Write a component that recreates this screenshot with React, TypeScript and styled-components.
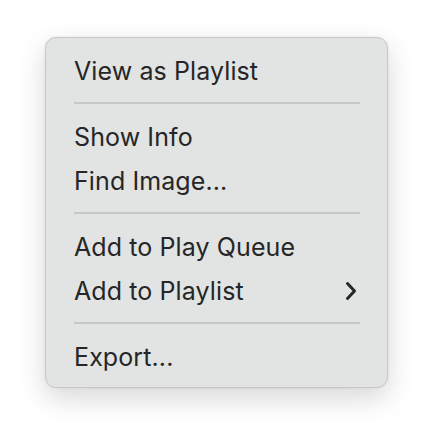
import React from 'react';
import styled, { createGlobalStyle } from 'styled-components';

const GlobalStyle = createGlobalStyle`
  html, body {
    margin: 0;
    padding: 0;
    background: #ffffff;
  }
  body {
    font-family: Inter, "Noto Sans", "Liberation Sans", sans-serif;
    -webkit-font-smoothing: antialiased;
  }
`;

type Entry = { label: string; submenu?: boolean } | 'sep';

const entries: Entry[] = [
  { label: 'View as Playlist' },
  'sep',
  { label: 'Show Info' },
  { label: 'Find Image...' },
  'sep',
  { label: 'Add to Play Queue' },
  { label: 'Add to Playlist', submenu: true },
  'sep',
  { label: 'Export...' },
];

const App: React.FC = () => (
  <Page>
    <GlobalStyle />
    <Menu>
      {entries.map((e, i) =>
        e === 'sep' ? (
          <Separator key={i} />
        ) : (
          <Item key={i}>
            <Label>{e.label}</Label>
            {e.submenu && (
              <Chevron viewBox="0 0 12 20" width="12" height="20">
                <path
                  d="M2.5 2.5 L9.5 10 L2.5 17.5"
                  fill="none"
                  stroke="#262626"
                  strokeWidth="3"
                  strokeLinecap="round"
                  strokeLinejoin="round"
                />
              </Chevron>
            )}
          </Item>
        )
      )}
    </Menu>
  </Page>
);

const Page = styled.div`
  padding: 37px 0 0 45px;
  min-height: 442px;
  box-sizing: border-box;
`;

const Menu = styled.div`
  width: 343px;
  box-sizing: border-box;
  padding: 11px 0 8px;
  background: #e2e3e3;
  border: 1px solid #c7c7c7;
  border-radius: 11px;
  box-shadow: 0 10px 28px rgba(0, 0, 0, 0.16), 0 0 3px rgba(0, 0, 0, 0.06);
  display: flex;
  flex-direction: column;
`;

const Item = styled.div`
  height: 44px;
  display: flex;
  align-items: center;
  justify-content: space-between;
  padding: 0 30px 0 28px;
`;

const Label = styled.span`
  font-size: 25px;
  color: #262626;
  letter-spacing: 0.1px;
  line-height: 1;
`;

const Chevron = styled.svg`
  display: block;
`;

const Separator = styled.div`
  height: 2px;
  margin: 9px 27px 11px 28px;
  background: #c8c8c8;
`;

export default App;
